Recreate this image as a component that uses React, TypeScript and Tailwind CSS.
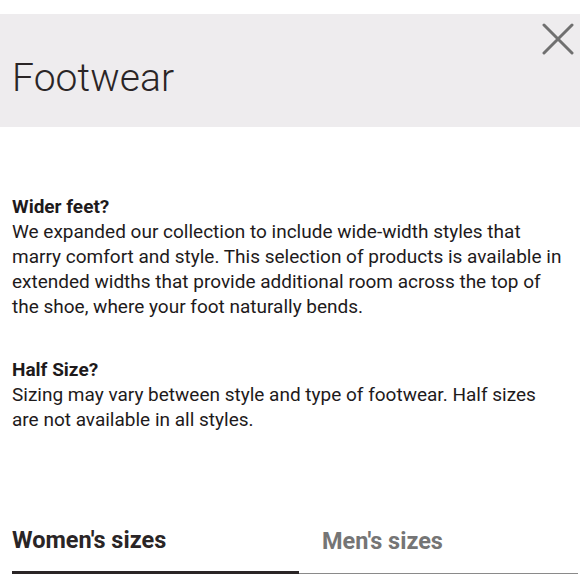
export default function App() {
  return (
    <div className="w-[580px] h-[580px] bg-white overflow-hidden" style={{ fontFamily: "Roboto, 'Liberation Sans', sans-serif" }}>
      <div className="h-[14px]" />
      {/* Header band */}
      <div className="relative h-[113px] bg-[#eeecee] pl-[12px] pt-[40px]">
        <h1 className="text-[39px] leading-[48px] font-light text-[#2a2526] tracking-[0.1px]">Footwear</h1>
        <button className="absolute right-[6px] top-[9px] w-[32px] h-[32px] flex items-center justify-center">
          <svg width="32" height="32" viewBox="0 0 32 32" fill="none" stroke="#707070" strokeWidth="3" strokeLinecap="round">
            <path d="M2 2 L30 30 M30 2 L2 30" />
          </svg>
        </button>
      </div>

      <div className="pl-[12px] pr-[8px] pt-[67px] text-[19px] leading-[25px] text-[#1e1a1b]">
        <h2 className="font-bold">Wider feet?</h2>
        <p>
          We expanded our collection to include wide-width styles that marry comfort and style. This selection of
          products is available in extended widths that provide additional room across the top of the shoe, where your
          foot naturally bends.
        </p>

        <h2 className="font-bold mt-[38px]">Half Size?</h2>
        <p className="max-w-[545px]">
          Sizing may vary between style and type of footwear. Half sizes are not available in all styles.
        </p>
      </div>

      {/* Tabs */}
      <div className="flex pl-[12px] pr-[2px] mt-[94px]">
        <div className="w-[287px] border-b-[3px] border-[#2a2526] pb-[16px]">
          <span className="text-[23.5px] leading-[28px] font-bold text-[#2a2526]">Women's sizes</span>
        </div>
        <div className="flex-1 border-b-[1.5px] border-[#8a8a8a] pb-[17px] pl-[23px] self-end">
          <span className="text-[23.5px] leading-[28px] font-bold text-[#757575]">Men's sizes</span>
        </div>
      </div>
    </div>
  );
}
